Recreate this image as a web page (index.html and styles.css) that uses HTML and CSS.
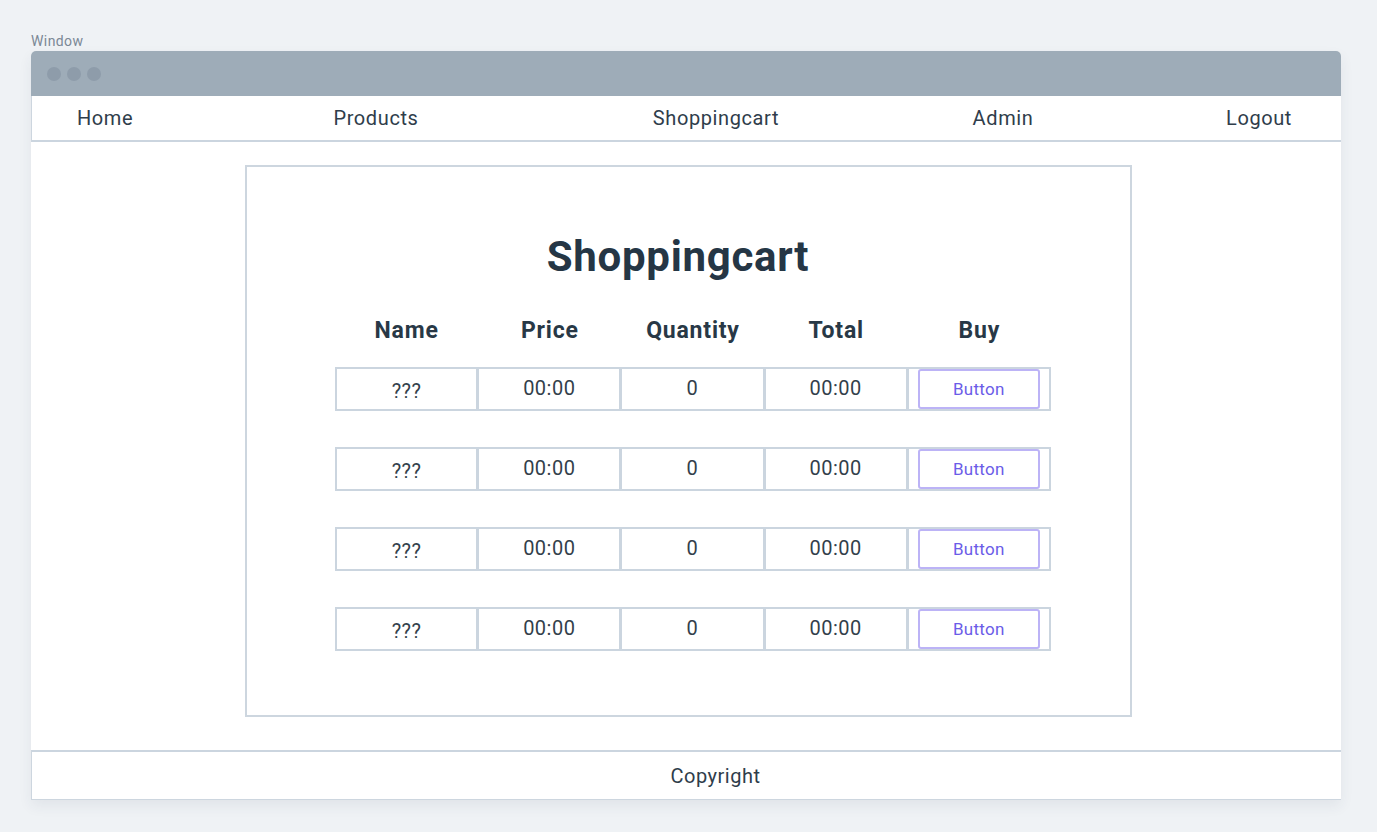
FILE: index.html
```html
<!DOCTYPE html>
<html lang="en">
<head>
<meta charset="utf-8">
<title>Shoppingcart</title>
<link rel="stylesheet" href="styles.css">
</head>
<body>
<div class="label">Window</div>
<div class="window">
  <div class="titlebar">
    <span class="dot"></span><span class="dot"></span><span class="dot"></span>
  </div>
  <nav class="nav">
    <a class="nav-item">Home</a>
    <a class="nav-item">Products</a>
    <a class="nav-item">Shoppingcart</a>
    <a class="nav-item">Admin</a>
    <a class="nav-item logout">Logout</a>
  </nav>
  <main class="content">
    <section class="box">
      <h1 class="title">Shoppingcart</h1>
      <div class="head">
        <div>Name</div><div>Price</div><div>Quantity</div><div>Total</div><div>Buy</div>
      </div>
      <div class="rows">
        <div class="row">
          <div class="cell q">???</div><div class="cell">00:00</div><div class="cell">0</div><div class="cell">00:00</div><div class="cell btn-cell"><button class="btn">Button</button></div>
        </div>
        <div class="row">
          <div class="cell q">???</div><div class="cell">00:00</div><div class="cell">0</div><div class="cell">00:00</div><div class="cell btn-cell"><button class="btn">Button</button></div>
        </div>
        <div class="row">
          <div class="cell q">???</div><div class="cell">00:00</div><div class="cell">0</div><div class="cell">00:00</div><div class="cell btn-cell"><button class="btn">Button</button></div>
        </div>
        <div class="row">
          <div class="cell q">???</div><div class="cell">00:00</div><div class="cell">0</div><div class="cell">00:00</div><div class="cell btn-cell"><button class="btn">Button</button></div>
        </div>
      </div>
    </section>
  </main>
  <footer class="footer">Copyright</footer>
</div>
</body>
</html>
```
FILE: styles.css
```css
* { box-sizing: border-box; }
html, body { margin: 0; padding: 0; }
body {
  background: #eff2f5;
  font-family: Roboto, "Liberation Sans", sans-serif;
  color: #2c3a48;
  padding: 33px 36px 0 31px;
  height: 832px;
}
.label {
  font-size: 14px;
  line-height: 17px;
  letter-spacing: 0.4px;
  color: #7b8896;
  margin-bottom: 1px;
}
.window {
  width: 1310px;
  background: #fff;
  border-radius: 5px 5px 0 0;
  box-shadow: 0 6px 14px rgba(40, 60, 80, 0.07);
}
.titlebar {
  height: 45px;
  background: #9eacb8;
  border-radius: 5px 5px 0 0;
  display: flex;
  align-items: center;
  gap: 6px;
  padding-left: 16px;
}
.dot {
  width: 14px;
  height: 14px;
  border-radius: 50%;
  background: #8e9caa;
}
.nav {
  height: 46px;
  border-left: 1px solid #cdd6df;
  border-bottom: 2px solid #cbd5df;
  display: grid;
  grid-template-columns: 146px 396px 284px 290px 1fr;
  align-items: center;
  font-size: 20px;
  letter-spacing: 0.6px;
  color: #2f3d4b;
}
.nav-item { text-align: center; }
.nav-item.logout { text-align: right; padding-right: 49px; }
.content {
  height: 608px;
  padding-top: 23px;
}
.box {
  margin-left: 214px;
  width: 887px;
  height: 552px;
  border: 2px solid #cdd6df;
  padding: 66px 0 0 88px;
}
.title {
  margin: 0 0 35px 0;
  width: 716px;
  text-align: center;
  font-size: 42px;
  line-height: 48px;
  letter-spacing: 0.7px;
  font-weight: 700;
  color: #253645;
  padding-right: 30px;
}
.head {
  display: grid;
  grid-template-columns: repeat(5, 143.2px);
  font-size: 23px;
  line-height: 30px;
  letter-spacing: 0.8px;
  font-weight: 700;
  color: #283846;
  text-align: center;
  margin-bottom: 21px;
}
.rows {
  display: flex;
  flex-direction: column;
  gap: 36px;
}
.row {
  display: grid;
  grid-template-columns: repeat(5, 143.2px);
  height: 44px;
}
.cell {
  border: 2px solid #cbd5df;
  margin-left: -1px;
  display: flex;
  align-items: center;
  justify-content: center;
  font-size: 20px;
  letter-spacing: 0.5px;
  color: #333f4b;
  padding-bottom: 3px;
}
.cell:first-child { margin-left: 0; }
.cell.q { padding-top: 4px; padding-bottom: 0; }
.btn-cell {
  padding: 0 9px;
  align-items: stretch;
}
.btn {
  flex: 1;
  border: 2px solid #bcb3f6;
  border-radius: 3px;
  background: #fff;
  color: #6b5ce8;
  font-family: Roboto, "Liberation Sans", sans-serif;
  font-size: 17px;
  letter-spacing: 0.3px;
  padding: 0;
}
.footer {
  height: 50px;
  border-top: 2px solid #cbd5df;
  border-left: 1px solid #cdd6df;
  border-bottom: 1px solid #cdd6df;
  display: flex;
  align-items: center;
  justify-content: center;
  padding-left: 58px;
  font-size: 20px;
  letter-spacing: 0.5px;
  color: #2f3d4b;
}
```
